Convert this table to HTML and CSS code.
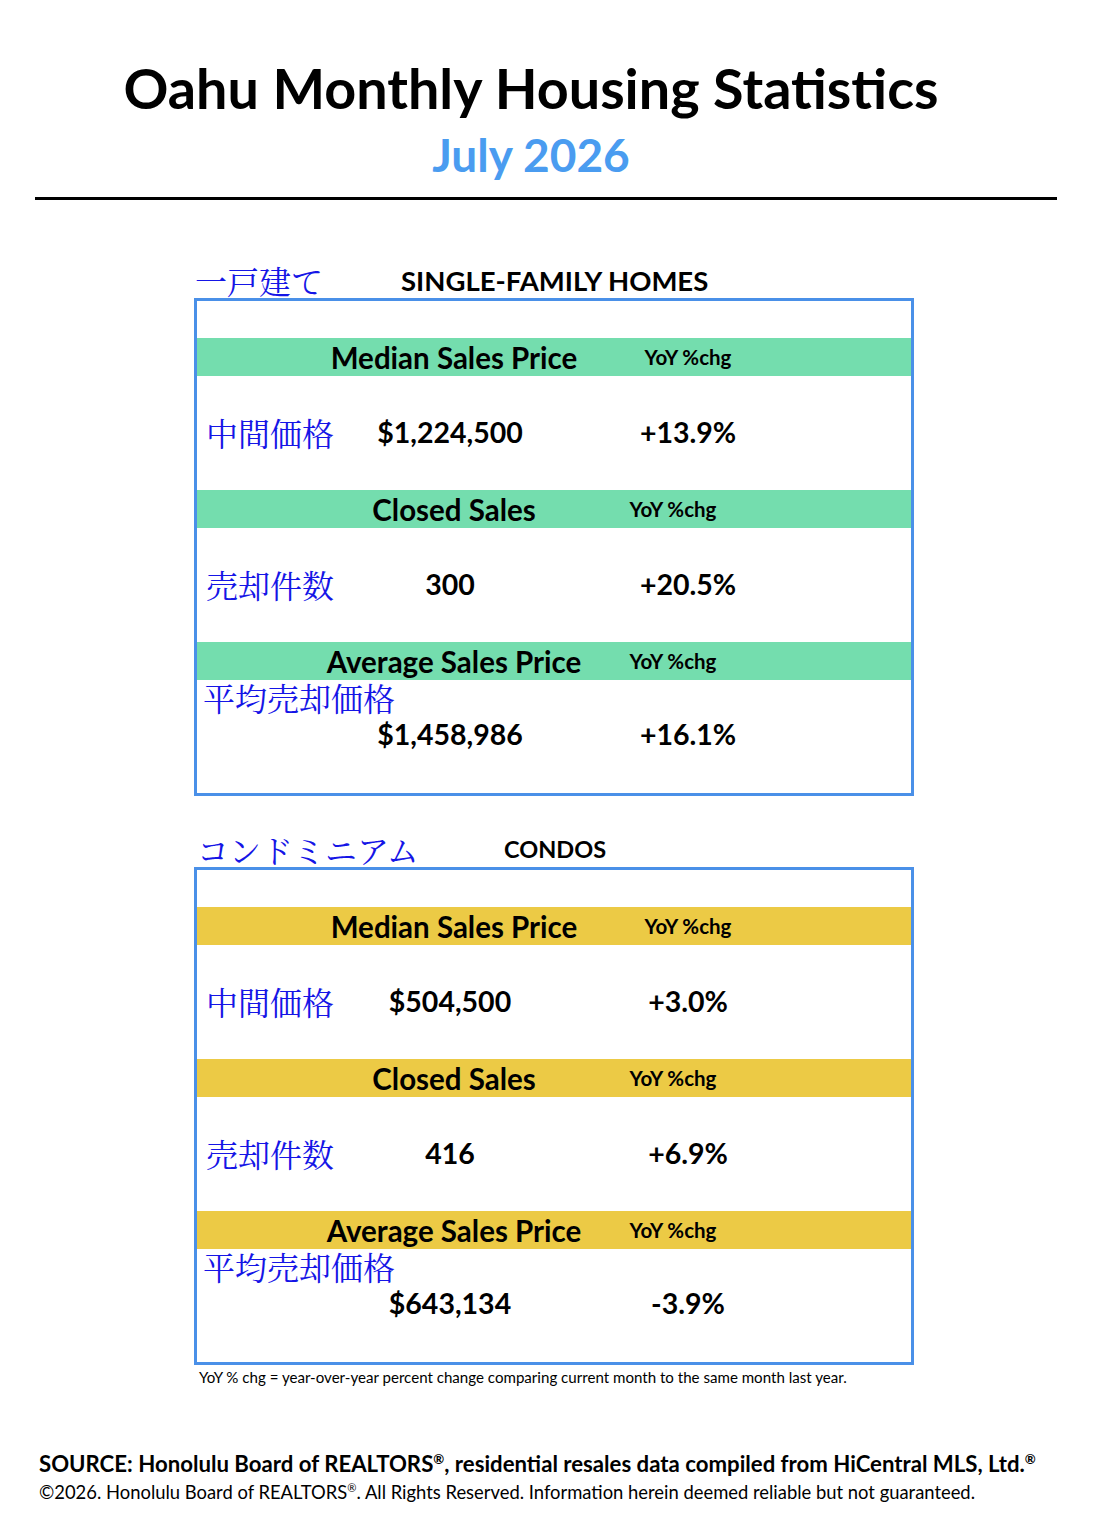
FILE: index.html
```html
<!DOCTYPE html>
<html lang="en">
<head>
<meta charset="utf-8">
<title>Oahu Monthly Housing Statistics</title>
<link rel="stylesheet" href="styles.css">
</head>
<body>
<div class="page">
  <header class="masthead">
    <h1 class="title">Oahu Monthly Housing Statistics</h1>
    <div class="subtitle">July 2026</div>
  </header>
  <div class="rule"></div>

  <section class="section section--sfh">
    <div class="section-head">
      <span class="jp jp-head">一戸建て</span>
      <span class="section-name">SINGLE-FAMILY HOMES</span>
    </div>
    <div class="box">
      <div class="bar bar--green">
        <span class="bar-title">Median Sales Price</span>
        <span class="bar-yoy">YoY %chg</span>
      </div>
      <div class="row">
        <span class="jp label">中間価格</span>
        <span class="value">$1,224,500</span>
        <span class="pct">+13.9%</span>
      </div>
      <div class="bar bar--green">
        <span class="bar-title">Closed Sales</span>
        <span class="bar-yoy bar-yoy--shift">YoY %chg</span>
      </div>
      <div class="row">
        <span class="jp label">売却件数</span>
        <span class="value">300</span>
        <span class="pct">+20.5%</span>
      </div>
      <div class="bar bar--green">
        <span class="bar-title">Average Sales Price</span>
        <span class="bar-yoy bar-yoy--shift">YoY %chg</span>
      </div>
      <div class="jp avg-label">平均売却価格</div>
      <div class="row row--avg">
        <span></span>
        <span class="value">$1,458,986</span>
        <span class="pct">+16.1%</span>
      </div>
    </div>
  </section>

  <section class="section section--condo">
    <div class="section-head">
      <span class="jp jp-head jp-head--condo">コンドミニアム</span>
      <span class="section-name section-name--condo">CONDOS</span>
    </div>
    <div class="box">
      <div class="bar bar--yellow">
        <span class="bar-title">Median Sales Price</span>
        <span class="bar-yoy">YoY %chg</span>
      </div>
      <div class="row">
        <span class="jp label">中間価格</span>
        <span class="value">$504,500</span>
        <span class="pct">+3.0%</span>
      </div>
      <div class="bar bar--yellow">
        <span class="bar-title">Closed Sales</span>
        <span class="bar-yoy bar-yoy--shift">YoY %chg</span>
      </div>
      <div class="row">
        <span class="jp label">売却件数</span>
        <span class="value">416</span>
        <span class="pct">+6.9%</span>
      </div>
      <div class="bar bar--yellow">
        <span class="bar-title">Average Sales Price</span>
        <span class="bar-yoy bar-yoy--shift">YoY %chg</span>
      </div>
      <div class="jp avg-label">平均売却価格</div>
      <div class="row row--avg">
        <span></span>
        <span class="value">$643,134</span>
        <span class="pct">-3.9%</span>
      </div>
    </div>
    <p class="footnote">YoY % chg = year-over-year percent change comparing current month to the same month last year.</p>
  </section>

  <footer class="source">
    <p class="source-line">SOURCE: Honolulu Board of REALTORS<sup>®</sup>, residential resales data compiled from HiCentral MLS, Ltd.<sup>®</sup></p>
    <p class="copyright">©2026. Honolulu Board of REALTORS<sup>®</sup>. All Rights Reserved. Information herein deemed reliable but not guaranteed.</p>
  </footer>
</div>
</body>
</html>
```

FILE: styles.css
```css
html, body {
  margin: 0;
  padding: 0;
  background: #ffffff;
}

body {
  font-family: Lato, "Open Sans", "Liberation Sans", sans-serif;
  color: #000000;
}

.page {
  width: 1100px;
  padding-top: 55px;
}

.masthead {
  padding-left: 35px;
  padding-right: 73px;
  text-align: center;
}

.title {
  margin: 0;
  font-size: 55.7px;
  line-height: 66px;
  font-weight: 700;
}

.subtitle {
  margin-top: 9px;
  font-size: 46px;
  line-height: 50px;
  font-weight: 700;
  color: #4a9cf0;
}

.rule {
  margin: 17px 43px 0 35px;
  height: 3px;
  background: #000000;
}

.jp {
  font-family: "Noto Serif CJK JP", "Noto Sans CJK JP", serif;
  color: #1515e6;
  font-weight: 400;
}

.section {
  margin-left: 194px;
  width: 720px;
}

.section--sfh {
  margin-top: 62px;
}

.section--condo {
  margin-top: 35px;
}

.section-head {
  display: flex;
  align-items: center;
  height: 36px;
}

.jp-head {
  font-size: 32px;
  line-height: 36px;
  width: 206px;
  padding-left: 1px;
}

.jp-head--condo {
  width: 307px;
  padding-left: 3px;
}

.section-name {
  font-size: 27.5px;
  font-weight: 700;
}

.section-name--condo {
  font-size: 23.5px;
}

.box {
  border: 3px solid #4a90e8;
  padding-top: 37px;
}

.bar {
  height: 38px;
  display: grid;
  grid-template-columns: 114px 286px 31px 120px 1fr;
  align-items: center;
}

.bar--green {
  background: #74ddae;
}

.bar--yellow {
  background: #ecca45;
}

.bar-title {
  grid-column: 2;
  justify-self: center;
  white-space: nowrap;
  font-size: 29.5px;
  font-weight: 700;
}

.bar-yoy {
  grid-column: 4;
  justify-self: center;
  white-space: nowrap;
  font-size: 20.5px;
  font-weight: 700;
}

.bar-yoy--shift {
  margin-right: 30px;
}

.row {
  height: 114px;
  box-sizing: border-box;
  padding-bottom: 3px;
  display: grid;
  grid-template-columns: 150px 206px 75px 120px 1fr;
  align-items: center;
}

.label {
  padding-left: 9px;
  font-size: 32px;
  line-height: 36px;
}

.value {
  grid-column: 2;
  justify-self: center;
  white-space: nowrap;
  font-size: 28.5px;
  font-weight: 700;
}

.pct {
  grid-column: 4;
  justify-self: center;
  white-space: nowrap;
  font-size: 28.5px;
  font-weight: 700;
}

.avg-label {
  padding-left: 6px;
  font-size: 32px;
  line-height: 34px;
}

.row--avg {
  height: 34px;
  padding-bottom: 0;
  margin-top: 3px;
  margin-bottom: 42px;
}

.footnote {
  margin: 3px 0 0 5px;
  font-size: 15.1px;
  line-height: 18px;
  white-space: nowrap;
}

.source {
  padding-left: 39px;
  margin-top: 64px;
}

.source-line {
  margin: 0;
  font-size: 22.2px;
  line-height: 28px;
  font-weight: 700;
  white-space: nowrap;
}

.copyright {
  margin: 2px 0 0 0;
  font-size: 18.4px;
  line-height: 24px;
  white-space: nowrap;
}

sup {
  font-size: 0.6em;
  line-height: 0;
}
```
